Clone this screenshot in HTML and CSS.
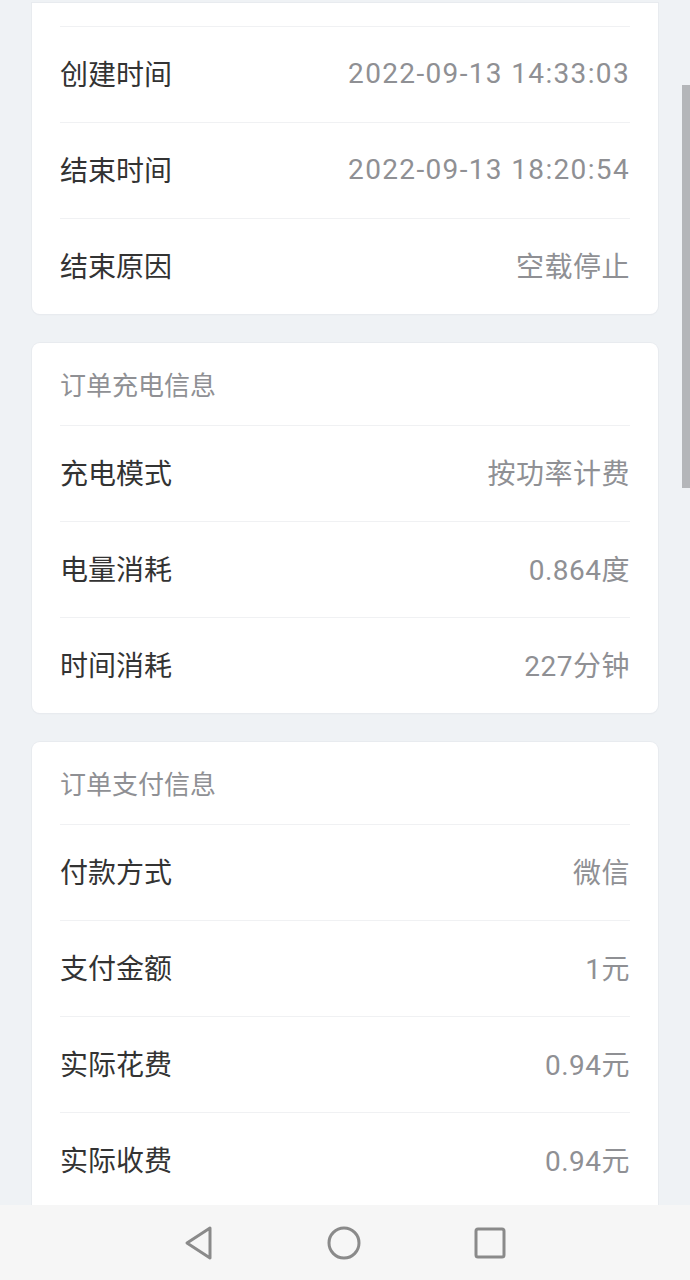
FILE: index.html
```html
<!DOCTYPE html>
<html lang="zh-CN">
<head>
<meta charset="utf-8">
<title>订单详情</title>
<link rel="stylesheet" href="styles.css">
</head>
<body>
<div class="screen">
  <main class="content">
    <section class="card card-cut">
      <div class="row-tail"></div>
      <div class="row"><span class="label">创建时间</span><span class="value value-date">2022-09-13 14:33:03</span></div>
      <div class="row"><span class="label">结束时间</span><span class="value value-date">2022-09-13 18:20:54</span></div>
      <div class="row"><span class="label">结束原因</span><span class="value">空载停止</span></div>
    </section>
    <section class="card">
      <div class="card-title">订单充电信息</div>
      <div class="row"><span class="label">充电模式</span><span class="value">按功率计费</span></div>
      <div class="row"><span class="label">电量消耗</span><span class="value">0.864度</span></div>
      <div class="row"><span class="label">时间消耗</span><span class="value">227分钟</span></div>
    </section>
    <section class="card">
      <div class="card-title">订单支付信息</div>
      <div class="row"><span class="label">付款方式</span><span class="value">微信</span></div>
      <div class="row"><span class="label">支付金额</span><span class="value">1元</span></div>
      <div class="row"><span class="label">实际花费</span><span class="value">0.94元</span></div>
      <div class="row"><span class="label">实际收费</span><span class="value">0.94元</span></div>
      <div class="row"><span class="label">&nbsp;</span><span class="value">&nbsp;</span></div>
    </section>
  </main>
  <div class="scrollbar"></div>
  <nav class="navbar">
    <svg class="nav-icon" width="30" height="36" viewBox="0 0 30 36"><path d="M26 3 L3 18 L26 33 Z" fill="none" stroke="#8a8a8a" stroke-width="3" stroke-linejoin="round"/></svg>
    <svg class="nav-icon" width="34" height="34" viewBox="0 0 34 34"><circle cx="17" cy="17" r="15" fill="none" stroke="#8a8a8a" stroke-width="3"/></svg>
    <svg class="nav-icon" width="32" height="32" viewBox="0 0 32 32"><rect x="2" y="2" width="28" height="28" rx="2" fill="none" stroke="#8a8a8a" stroke-width="3"/></svg>
  </nav>
</div>
</body>
</html>
```
FILE: styles.css
```css
* { box-sizing: border-box; }
html, body { margin: 0; padding: 0; }
body {
  width: 690px;
  height: 1280px;
  overflow: hidden;
  background: #eff2f5;
  font-family: "Noto Sans CJK SC", "Noto Sans", sans-serif;
}
.screen {
  position: relative;
  width: 690px;
  height: 1280px;
  overflow: hidden;
}
.content {
  padding: 3px 32px 0 32px;
  display: flex;
  flex-direction: column;
  gap: 29px;
}
.card {
  background: #fff;
  border-radius: 8px;
  box-shadow: 0 0 0 1px #e8ebef, 0 1px 2px rgba(0,0,0,0.04);
  padding: 0 28px;
}
.card-cut { border-top-left-radius: 0; border-top-right-radius: 0; }
.row-tail { height: 23px; }
.card-title {
  height: 82px;
  display: flex;
  align-items: center;
  font-size: 26px;
  color: #8f9094;
  padding-bottom: 2px;
}
.row {
  height: 96px;
  border-top: 1px solid #f0f1f3;
  display: flex;
  align-items: center;
  justify-content: space-between;
  padding-bottom: 3px;
}
.label {
  font-size: 28px;
  color: #333;
}
.value {
  font-size: 28px;
  color: #8f9094;
  font-family: "Roboto", "Noto Sans CJK SC", sans-serif;
  letter-spacing: 0.5px;
}
.value-date { letter-spacing: 1.35px; }
.scrollbar {
  position: absolute;
  right: 0;
  top: 85px;
  width: 8px;
  height: 403px;
  background: #b4b6b9;
}
.navbar {
  position: absolute;
  left: 0;
  bottom: 0;
  width: 690px;
  height: 75px;
  background: #f6f6f6;
  display: flex;
  align-items: center;
  justify-content: center;
  gap: 113px;
}
.nav-icon { display: block; }
```
